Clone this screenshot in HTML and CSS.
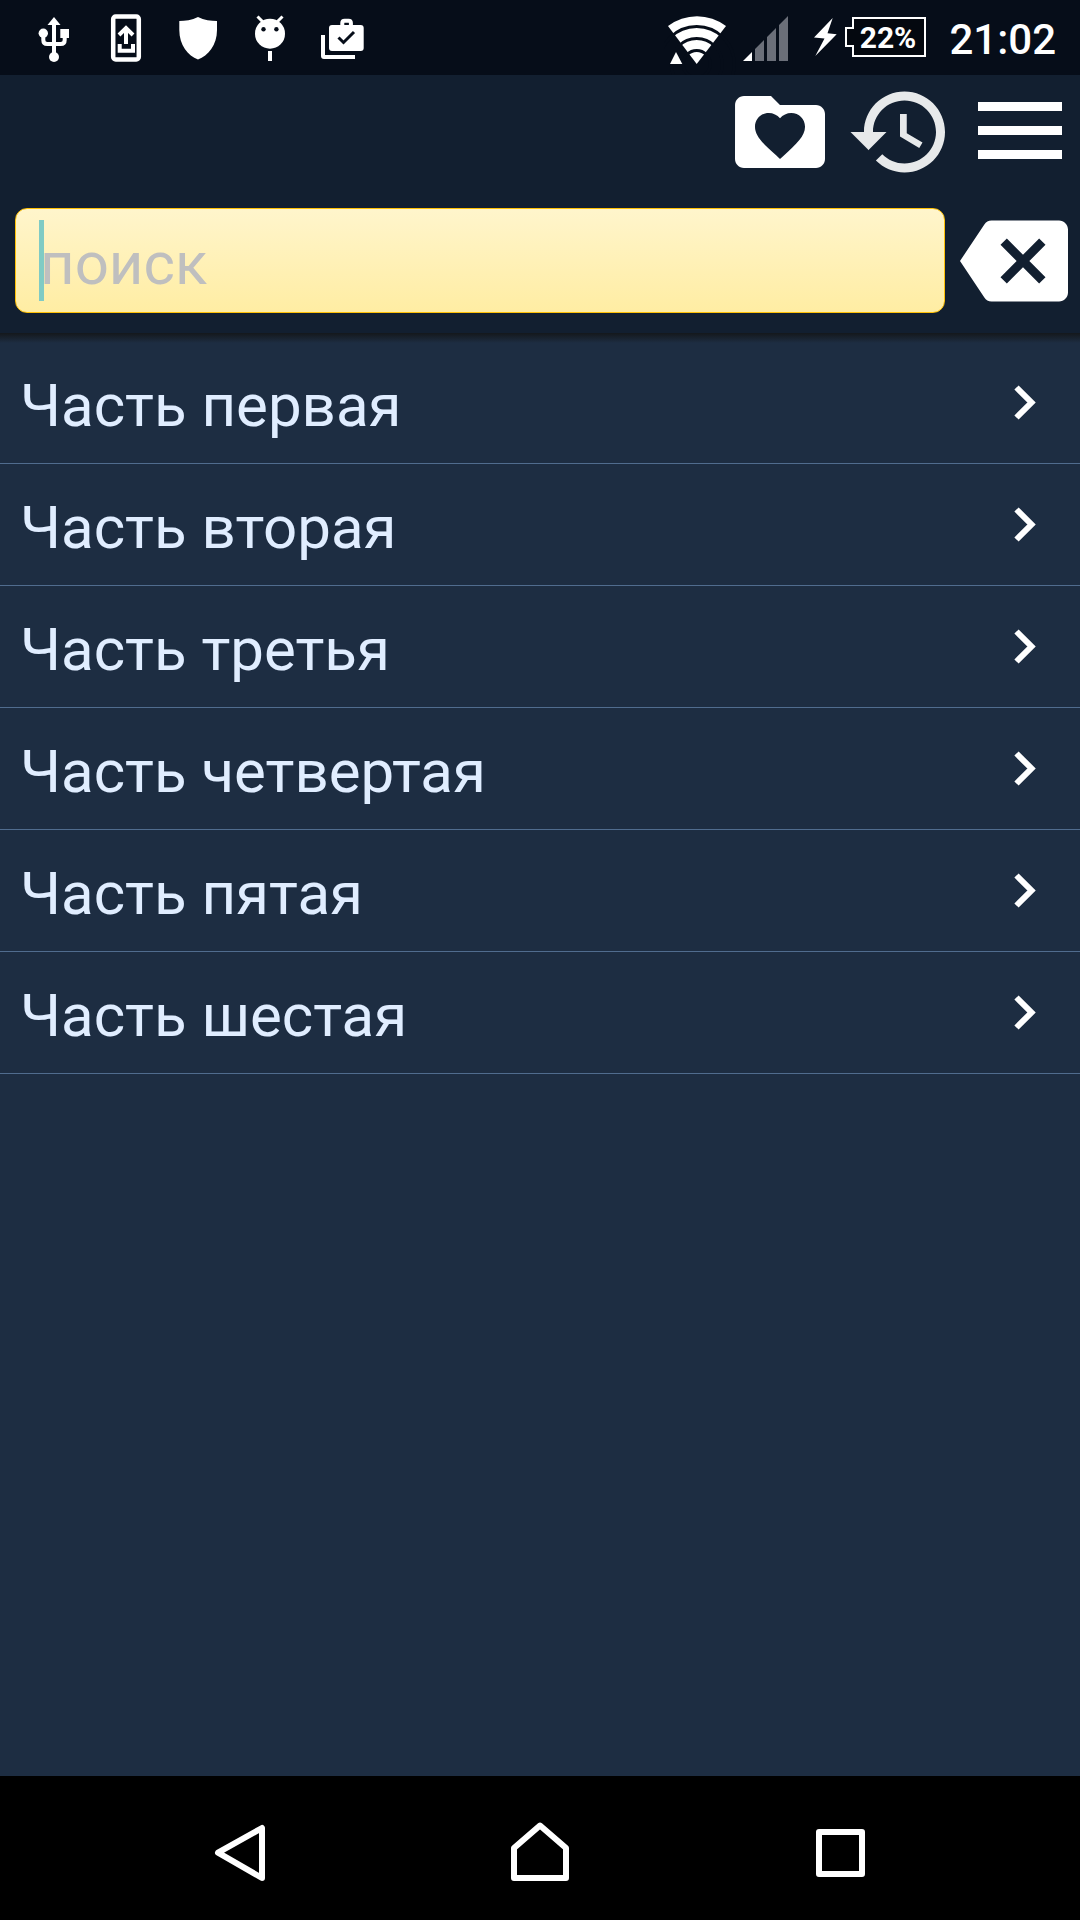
FILE: index.html
```html
<!DOCTYPE html>
<html lang="ru">
<head>
<meta charset="utf-8">
<meta name="viewport" content="width=device-width, initial-scale=1">
<title>Содержание</title>
<link rel="stylesheet" href="styles.css">
</head>
<body>
<div class="status">
  <div class="status-group">
    <svg class="notice" viewBox="0 0 72 75" aria-hidden="true">
      <path class="fill" d="M36 17l6.500 8h-13z"/><path class="line" stroke-width="4" d="M36 24v32M25.300 34v6q0 4 4 4h13.400q4 0 4-4v-5"/>
      <circle class="fill" cx="25.300" cy="33.300" r="4.700"/><path class="fill" d="M42.300 29h8.700v9h-8.700z"/><circle class="fill" cx="36" cy="57" r="5"/>
    </svg>
    <svg class="notice" viewBox="0 0 72 75" aria-hidden="true">
      <rect class="line" x="23.200" y="16.500" width="25.600" height="43" rx="2.500" stroke-width="4.500"/>
      <path class="line" stroke-width="4" d="M29 35l7-7 7 7M36 28v16"/><path class="line" stroke-width="4" d="M29.700 44v6.700h13.300V44"/>
    </svg>
    <svg class="notice" viewBox="0 0 72 75" aria-hidden="true">
      <path class="fill" d="M36 17C30 20 23 21 17.300 21V30C17.300 45 26 56 36 59.500 46 56 55 45 55 30V21C49 21 42 20 36 17z"/>
    </svg>
    <svg class="notice" viewBox="0 0 72 75" aria-hidden="true">
      <circle class="fill" cx="36" cy="33.700" r="15"/><path class="line" stroke-width="3" d="M23.500 16.500l5.500 5.500M48.500 16.500L43 22"/>
      <circle class="status-ink" cx="29.500" cy="29.300" r="2.200"/><circle class="status-ink" cx="42.400" cy="29.300" r="2.200"/><path class="fill" d="M34 51h4v10h-4z"/>
    </svg>
    <svg class="notice" viewBox="0 0 72 75" aria-hidden="true">
      <rect class="fill" x="23" y="25" width="34.700" height="26" rx="3"/><path class="line" stroke-width="4" d="M36.300 26v-3q0-2.300 2.300-2.300h4q2.300 0 2.300 2.300v3"/>
      <path class="fill" d="M15 35h4v20h30v4H18q-3 0-3-3z"/><path class="status-cut" d="M32.500 37.500l5 5L48 32"/>
    </svg>
  </div>
  <div class="status-group">
    <svg class="wifi" viewBox="0 0 76 75" aria-hidden="true">
      <path class="fill" d="M32.700 64L4 26A47.800 47.800 0 0 1 62 26z"/>
      <g class="wifi-gap"><circle cx="32.700" cy="64" r="37.500"/><circle cx="32.700" cy="64" r="25.500"/><circle cx="32.700" cy="64" r="13.500"/></g>
      <path class="fill" d="M12 52l6.300 12H6z"/>
    </svg>
    <svg class="signal" viewBox="0 0 72 75" aria-hidden="true">
      <path class="fill" d="M12 52v9H3z"/><path class="dim" d="M15 49l9-9v21h-9zM27 37l9-9v33h-9zM39 25l9-9v45h-9z"/>
    </svg>
    <svg class="battery" viewBox="0 0 116 75" role="img" aria-label="22%">
      <path class="fill" d="M20.700 18L2 37.500l10.500 1L3.300 56 24.700 34.300l-9.200-1z"/>
      <path class="battery-case" d="M41 18h72v38H41V46h-7V28h7z"/>
      <text class="battery-text" x="76" y="48">22%</text>
    </svg>
    <time class="clock">21:02</time>
  </div>
</div>
<header class="header">
  <nav class="tools">
    <button class="tool" type="button" aria-label="Избранное">
      <svg viewBox="0 0 24 24"><path class="fill" d="M10 4H4c-1.100 0-1.990.900-1.990 2L2 18c0 1.100.900 2 2 2h16c1.100 0 2-.900 2-2V8c0-1.100-.900-2-2-2h-8z"/><path class="header-ink" transform="translate(5.330 6.110) scale(.556)" d="M12 21.350l-1.450-1.320C5.400 15.360 2 12.280 2 8.500 2 5.420 4.420 3 7.500 3c1.740 0 3.410.810 4.500 2.090C13.090 3.810 14.760 3 16.500 3 19.580 3 22 5.420 22 8.500c0 3.780-3.400 6.860-8.550 11.540z"/></svg>
    </button>
    <button class="tool" type="button" aria-label="История">
      <svg viewBox="0 0 24 24"><path class="soft" d="M13 3c-4.970 0-9 4.030-9 9H1l3.890 3.890.070.140L9 12H6c0-3.870 3.130-7 7-7s7 3.130 7 7-3.130 7-7 7c-1.930 0-3.680-.790-4.940-2.060l-1.420 1.420C8.270 19.990 10.510 21 13 21c4.970 0 9-4.030 9-9s-4.030-9-9-9zm-1 5v5l4.280 2.540.720-1.210-3.500-2.080V8z"/></svg>
    </button>
    <button class="tool" type="button" aria-label="Меню">
      <svg viewBox="0 0 108 108"><path class="fill" d="M12 24h84v9H12zM12 48h84v9H12zM12 72h84v9H12z"/></svg>
    </button>
  </nav>
  <form class="search">
    <div class="field">
      <input class="field-input" type="text" placeholder="поиск" aria-label="поиск">
      <span class="caret"></span>
    </div>
    <button class="tool" type="reset" aria-label="Очистить">
      <svg viewBox="0 0 24 24"><path class="fill" d="M22 3H7c-.690 0-1.230.350-1.590.880L0 12l5.410 8.110c.360.530.900.890 1.590.890h15c1.100 0 2-.900 2-2V5c0-1.100-.900-2-2-2zm-3 12.590L17.590 17 14 13.410 10.410 17 9 15.590 12.590 12 9 8.410 10.410 7 14 10.590 17.590 7 19 8.410 15.410 12z"/></svg>
    </button>
  </form>
</header>
<main class="content">
  <ul class="parts">
    <li><a class="part" href="#part1"><span class="part-name">Часть первая</span><svg class="chevron" viewBox="0 0 28 40"><path d="M4.500 4.500l15 15-15 15"/></svg></a></li>
    <li><a class="part" href="#part2"><span class="part-name">Часть вторая</span><svg class="chevron" viewBox="0 0 28 40"><path d="M4.500 4.500l15 15-15 15"/></svg></a></li>
    <li><a class="part" href="#part3"><span class="part-name">Часть третья</span><svg class="chevron" viewBox="0 0 28 40"><path d="M4.500 4.500l15 15-15 15"/></svg></a></li>
    <li><a class="part" href="#part4"><span class="part-name">Часть четвертая</span><svg class="chevron" viewBox="0 0 28 40"><path d="M4.500 4.500l15 15-15 15"/></svg></a></li>
    <li><a class="part" href="#part5"><span class="part-name">Часть пятая</span><svg class="chevron" viewBox="0 0 28 40"><path d="M4.500 4.500l15 15-15 15"/></svg></a></li>
    <li><a class="part" href="#part6"><span class="part-name">Часть шестая</span><svg class="chevron" viewBox="0 0 28 40"><path d="M4.500 4.500l15 15-15 15"/></svg></a></li>
  </ul>
</main>
<footer class="navbar">
  <button class="nav-button" type="button" aria-label="Назад"><svg viewBox="0 0 72 72"><path d="M14 40.700L58 16v50z"/></svg></button>
  <button class="nav-button" type="button" aria-label="Домой"><svg viewBox="0 0 72 72"><path d="M36 13.500l26 22.500v30H10V36z"/></svg></button>
  <button class="nav-button" type="button" aria-label="Недавние"><svg viewBox="0 0 72 72"><path d="M15 20h43v42H15z"/></svg></button>
</footer>
</body>
</html>
```
FILE: styles.css
```css
* { box-sizing: border-box; }

body {
  display: flex;
  flex-direction: column;
  min-height: 100vh;
  margin: 0;
  background: #1d2d42;
  font-family: Roboto, "Noto Sans", sans-serif;
}

svg { display: block; flex: none; }

button {
  padding: 0;
  border: 0;
  background: none;
}

.fill { fill: #fff; }
.soft { fill: #e7e9ea; }
.dim { fill: #6b6f79; }
.line { fill: none; stroke: #fff; }
.header-ink { fill: #121f30; }
.status-ink { fill: #060d19; }

.status-cut {
  fill: none;
  stroke: #060d19;
  stroke-width: 3;
}

.status {
  display: flex;
  justify-content: space-between;
  padding: 0 24px 0 18px;
  background: #060d19;
  color: #fff;
}

.status-group {
  display: flex;
  align-items: center;
  height: 75px;
}

.notice, .signal { width: 72px; height: 75px; }
.wifi { width: 76px; height: 75px; }
.battery { width: 116px; height: 75px; }

.wifi-gap {
  fill: none;
  stroke: #060d19;
  stroke-width: 3;
}

.battery-case {
  fill: #04080f;
  stroke: #fff;
  stroke-width: 2;
}

.battery-text {
  fill: #fff;
  font-size: 30px;
  font-weight: 700;
  text-anchor: middle;
}

.clock {
  margin-left: 21px;
  padding-top: 4px;
  font-size: 42px;
  font-weight: 500;
  line-height: 48px;
}

.header {
  padding: 3px 0 18px;
  background: #121f30;
}

.tools {
  display: flex;
  justify-content: flex-end;
  gap: 12px;
  padding-right: 6px;
}

.tool svg { width: 108px; height: 108px; }

.search {
  display: flex;
  align-items: center;
  gap: 15px;
  margin: 21px 12px 0 15px;
}

.field {
  position: relative;
  flex: 1;
  height: 105px;
  margin-bottom: 1px;
}

.field-input {
  display: block;
  width: 100%;
  height: 100%;
  padding: 6px 24px 0;
  border: 1px solid #ffc107;
  border-radius: 12px;
  outline: 0;
  background: linear-gradient(#fff5cc, #ffeda3);
  color: #222;
  font: 60px Roboto, "Noto Sans", sans-serif;
}

.field-input::placeholder { color: #bfbfbf; opacity: 1; }

.caret {
  position: absolute;
  top: 12px;
  left: 24px;
  width: 5px;
  height: 81px;
  background: #80cbc4;
}

.content {
  flex: 1;
  padding-top: 9px;
  background: linear-gradient(#14181c, #1d2d42 10px);
}

.parts {
  margin: 0;
  padding: 0;
  list-style: none;
}

.part {
  display: flex;
  align-items: center;
  justify-content: space-between;
  height: 122px;
  padding: 0 40px 0 20px;
  border-bottom: 1px solid #506c8e;
  color: #e0edff;
  font-size: 60px;
  line-height: 70px;
  text-decoration: none;
}

.part-name { padding-top: 6px; }

.chevron {
  width: 28px;
  height: 40px;
  fill: none;
  stroke: #fff;
  stroke-width: 6;
}

.navbar {
  display: grid;
  grid-template-columns: repeat(3, 1fr);
  padding: 0 90px;
  background: #000;
}

.nav-button {
  display: grid;
  place-items: center;
  height: 144px;
}

.nav-button svg {
  width: 72px;
  height: 72px;
  fill: none;
  stroke: #fff;
  stroke-width: 6;
  stroke-linejoin: round;
}
```
